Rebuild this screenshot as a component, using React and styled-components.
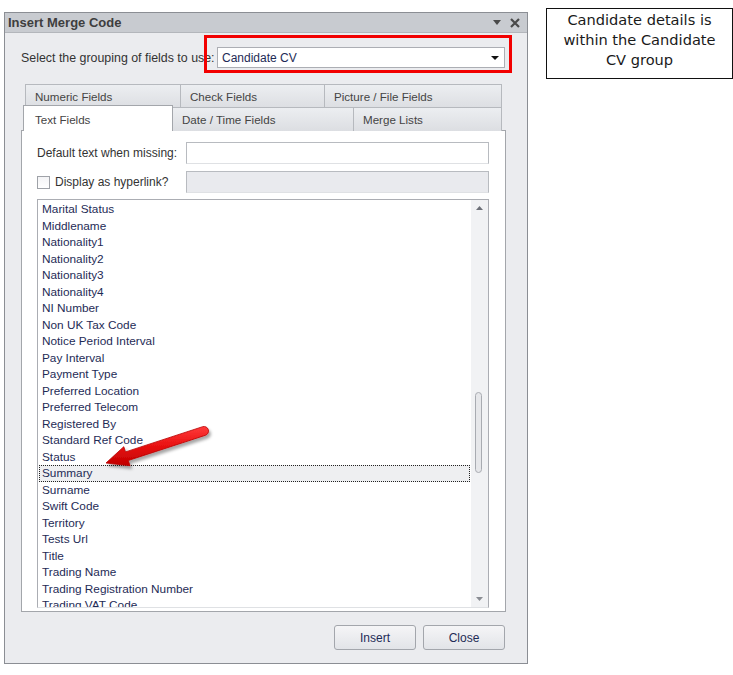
import React from "react";
import styled, { createGlobalStyle } from "styled-components";

const GlobalStyle = createGlobalStyle`
  html, body { margin: 0; padding: 0; background: #ffffff; }
  body { font-family: "Liberation Sans", Arial, sans-serif; }
  * { box-sizing: border-box; }
`;

const Page = styled.div`
  position: relative;
  display: flex;
  align-items: flex-start;
  width: 733px;
  height: 675px;
  padding: 8px 0 0 4px;
  overflow: hidden;
`;

const Dialog = styled.div`
  position: relative;
  margin-top: 4px;
  width: 524px;
  border: 1px solid #8b8e94;
  background: #ebecef;
  display: flex;
  flex-direction: column;
`;

const TitleBar = styled.div`
  height: 20px;
  display: flex;
  align-items: center;
  padding: 0 7px 0 3px;
  background: #c8cbd0;
  border-bottom: 1px solid #b3b6bb;
`;

const Title = styled.span`
  font-size: 13px;
  font-weight: bold;
  color: #3e3e3e;
`;

const TitleIcons = styled.div`
  margin-left: auto;
  display: flex;
  align-items: center;
  gap: 9px;
`;

const Body = styled.div`
  display: flex;
  flex-direction: column;
  padding: 14px 21px 13px 16px;
`;

const ComboRow = styled.div`
  display: flex;
  align-items: center;
  height: 21px;
`;

const Label = styled.span`
  font-size: ${(p) => p.$size || 12}px;
  color: #333333;
  width: ${(p) => (p.$width ? `${p.$width}px` : "auto")};
  flex-shrink: 0;
  white-space: nowrap;
`;

const Combo = styled.div`
  margin-left: auto;
  margin-right: 1px;
  width: 288px;
  height: 21px;
  border: 1px solid #acaeb4;
  background: #ffffff;
  display: flex;
  align-items: center;
  padding: 0 5px 0 4px;
  font-size: 12px;
  color: #1e2b56;
`;

const ComboArrow = styled.svg`
  margin-left: auto;
`;

const RedFrame = styled.div`
  position: absolute;
  left: 199px;
  top: 22px;
  width: 308px;
  height: 38px;
  border: 3px solid #f20000;
  pointer-events: none;
`;

const TabStrip = styled.div`
  margin-top: 16px;
  display: flex;
  flex-direction: column;
`;

const TabRow = styled.div`
  position: relative;
  z-index: 1;
  display: flex;
  align-items: flex-start;
  height: ${(p) => p.$height}px;
  padding-left: ${(p) => p.$indent}px;
  margin-top: ${(p) => p.$offset}px;
`;

const Tab = styled.div`
  position: relative;
  width: ${(p) => p.$width}px;
  height: ${(p) => (p.$active ? 26 : 24)}px;
  margin-top: ${(p) => (p.$active ? -2 : 0)}px;
  margin-left: ${(p) => (p.$first ? 0 : -1)}px;
  z-index: ${(p) => (p.$active ? 3 : 1)};
  border: 1px solid ${(p) => (p.$active ? "#a3a6ab" : "#b6b9be")};
  border-bottom: none;
  background: ${(p) =>
    p.$active ? "#ffffff" : "linear-gradient(#eceef1, #dcdee2)"};
  display: flex;
  align-items: center;
  padding-left: ${(p) => (p.$active ? 11 : 9)}px;
  padding-top: ${(p) => (p.$active ? 1 : 0)}px;
  font-size: 11.6px;
  color: #444444;
  white-space: nowrap;
`;

const Panel = styled.div`
  position: relative;
  z-index: 0;
  height: 482px;
  border: 1px solid #a3a6ab;
  background: #ffffff;
  display: flex;
  flex-direction: column;
  padding: 11px 16px 3px 15px;
`;

const FieldRow = styled.div`
  display: flex;
  align-items: center;
  height: 22px;
  margin-top: ${(p) => p.$gap || 0}px;
`;

const TextInput = styled.div`
  flex: 1;
  height: 22px;
  border: 1px solid #b8bbc0;
  border-bottom-color: #dfe1e4;
  background: ${(p) => (p.$disabled ? "#e9eaee" : "#ffffff")};
`;

const CheckLabel = styled.label`
  width: 149px;
  display: flex;
  align-items: center;
  gap: 5px;
  font-size: 12px;
  color: #333333;
`;

const CheckBox = styled.span`
  width: 13px;
  height: 13px;
  border: 1px solid #9fa2a8;
  background: linear-gradient(#f4f4f6, #ffffff);
`;

const ListBox = styled.div`
  margin-top: 6px;
  flex: 1;
  display: flex;
  border: 1px solid #abadb3;
  border-bottom-color: #dfe1e4;
  overflow: hidden;
`;

const Items = styled.div`
  flex: 1;
  overflow: hidden;
  padding-top: 1px;
`;

const Item = styled.div`
  height: 16.5px;
  line-height: 15.5px;
  margin: 0 1px;
  padding-left: 2px;
  border: 1px ${(p) => (p.$selected ? "dotted #222222" : "solid transparent")};
  background: ${(p) => (p.$selected ? "#eeeff1" : "transparent")};
  font-size: 11.8px;
  color: #1e2b56;
  white-space: nowrap;
`;

const ScrollBar = styled.div`
  width: 17px;
  background: #f1f2f4;
  display: flex;
  flex-direction: column;
`;

const ScrollButton = styled.div`
  height: 16px;
  display: flex;
  align-items: center;
  justify-content: center;
`;

const Track = styled.div`
  flex: 1;
  display: flex;
  flex-direction: column;
  align-items: center;
`;

const Thumb = styled.div`
  width: 7px;
  margin-left: -2px;
  border: 1px solid #a8abb1;
  border-radius: 4px;
  background: #e6e7ea;
`;

const ButtonRow = styled.div`
  margin-top: 13px;
  display: flex;
  justify-content: flex-end;
  gap: 7px;
  padding-right: 1px;
`;

const Button = styled.button`
  width: 82px;
  height: 25px;
  border: 1px solid #a3a6ac;
  border-radius: 3px;
  background: linear-gradient(#f5f5f7, #e2e4e8);
  font-family: "Liberation Sans", Arial, sans-serif;
  font-size: 12px;
  color: #1e2b56;
  padding: 0;
`;

const Note = styled.div`
  margin-left: 18px;
  width: 187px;
  height: 71px;
  border: 1px solid #111111;
  padding-top: 1px;
  text-align: center;
  font-family: "DejaVu Sans", Verdana, sans-serif;
  font-size: 14.6px;
  line-height: 20px;
  color: #1a1a1a;
`;

const ArrowSvg = styled.svg`
  position: absolute;
  left: 95px;
  top: 415px;
  overflow: visible;
  pointer-events: none;
`;

const items = [
  "Marital Status",
  "Middlename",
  "Nationality1",
  "Nationality2",
  "Nationality3",
  "Nationality4",
  "NI Number",
  "Non UK Tax Code",
  "Notice Period Interval",
  "Pay Interval",
  "Payment Type",
  "Preferred Location",
  "Preferred Telecom",
  "Registered By",
  "Standard Ref Code",
  "Status",
  "Summary",
  "Surname",
  "Swift Code",
  "Territory",
  "Tests Url",
  "Title",
  "Trading Name",
  "Trading Registration Number",
  "Trading VAT Code",
];

const row1 = [
  { label: "Numeric Fields", width: 156 },
  { label: "Check Fields", width: 145 },
  { label: "Picture / File Fields", width: 178 },
];
const row2 = [
  { label: "Text Fields", width: 150, active: true },
  { label: "Date / Time Fields", width: 182 },
  { label: "Merge Lists", width: 149 },
];

const Triangle = ({ w = 7, h = 4, color = "#333", up = false }) => (
  <svg width={w} height={h} viewBox={`0 0 ${w} ${h}`}>
    <polygon
      points={up ? `0,${h} ${w},${h} ${w / 2},0` : `0,0 ${w},0 ${w / 2},${h}`}
      fill={color}
    />
  </svg>
);

export default function App() {
  const selectedIndex = 16;
  return (
    <>
      <GlobalStyle />
      <Page>
        <Dialog>
          <TitleBar>
            <Title>Insert Merge Code</Title>
            <TitleIcons>
              <Triangle w={8} h={5} color="#4a4a4a" />
              <svg width="10" height="10" viewBox="0 0 10 10">
                <path d="M1 1 L9 9 M9 1 L1 9" stroke="#4a4a4a" strokeWidth="2.2" />
              </svg>
            </TitleIcons>
          </TitleBar>
          <Body>
            <ComboRow>
              <Label $size={12.4}>Select the grouping of fields to use:</Label>
              <Combo>
                Candidate CV
                <ComboArrow width="8" height="4" viewBox="0 0 8 4">
                  <polygon points="0,0 8,0 4,4" fill="#111" />
                </ComboArrow>
              </Combo>
            </ComboRow>
            <TabStrip>
              <TabRow $height={24} $indent={4} $offset={0}>
                {row1.map((t, i) => (
                  <Tab key={t.label} $width={t.width} $first={i === 0}>
                    {t.label}
                  </Tab>
                ))}
              </TabRow>
              <TabRow $height={23} $indent={2} $offset={-1}>
                {row2.map((t, i) => (
                  <Tab key={t.label} $width={t.width} $first={i === 0} $active={t.active}>
                    {t.label}
                  </Tab>
                ))}
              </TabRow>
              <Panel>
                <FieldRow>
                  <Label $width={149}>Default text when missing:</Label>
                  <TextInput />
                </FieldRow>
                <FieldRow $gap={7}>
                  <CheckLabel>
                    <CheckBox />
                    Display as hyperlink?
                  </CheckLabel>
                  <TextInput $disabled />
                </FieldRow>
                <ListBox>
                  <Items>
                    {items.map((it, i) => (
                      <Item key={it} $selected={i === selectedIndex}>
                        {it}
                      </Item>
                    ))}
                  </Items>
                  <ScrollBar>
                    <ScrollButton>
                      <Triangle w={7} h={4} color="#6d7078" up />
                    </ScrollButton>
                    <Track>
                      <Thumb style={{ marginTop: 176, height: 81 }} />
                    </Track>
                    <ScrollButton>
                      <Triangle w={7} h={4} color="#8a8d93" />
                    </ScrollButton>
                  </ScrollBar>
                </ListBox>
              </Panel>
            </TabStrip>
            <ButtonRow>
              <Button>Insert</Button>
              <Button>Close</Button>
            </ButtonRow>
          </Body>
          <RedFrame />
        </Dialog>
        <Note>
          Candidate details is
          <br />
          within the Candidate
          <br />
          CV group
        </Note>
        <ArrowSvg width="120" height="65" viewBox="95 415 120 65">
          <defs>
            <linearGradient id="arrowFill" x1="0" y1="0" x2="0" y2="1">
              <stop offset="0" stopColor="#ff3a3a" />
              <stop offset="0.5" stopColor="#e81010" />
              <stop offset="1" stopColor="#c00000" />
            </linearGradient>
            <filter id="arrowShadow" x="-20%" y="-40%" width="140%" height="180%">
              <feDropShadow dx="2" dy="3" stdDeviation="1.6" floodColor="#000" floodOpacity="0.35" />
            </filter>
          </defs>
          <path
            d="M202.6 426.7 L125.5 451.9 L123.8 446.7 L106 463 L130 465.7 L128.3 460.5 L205.4 435.3 A4.5 4.5 0 0 0 202.6 426.7 Z"
            fill="url(#arrowFill)"
            stroke="#b80000"
            strokeWidth="0.8"
            strokeLinejoin="round"
            filter="url(#arrowShadow)"
          />
        </ArrowSvg>
      </Page>
    </>
  );
}
